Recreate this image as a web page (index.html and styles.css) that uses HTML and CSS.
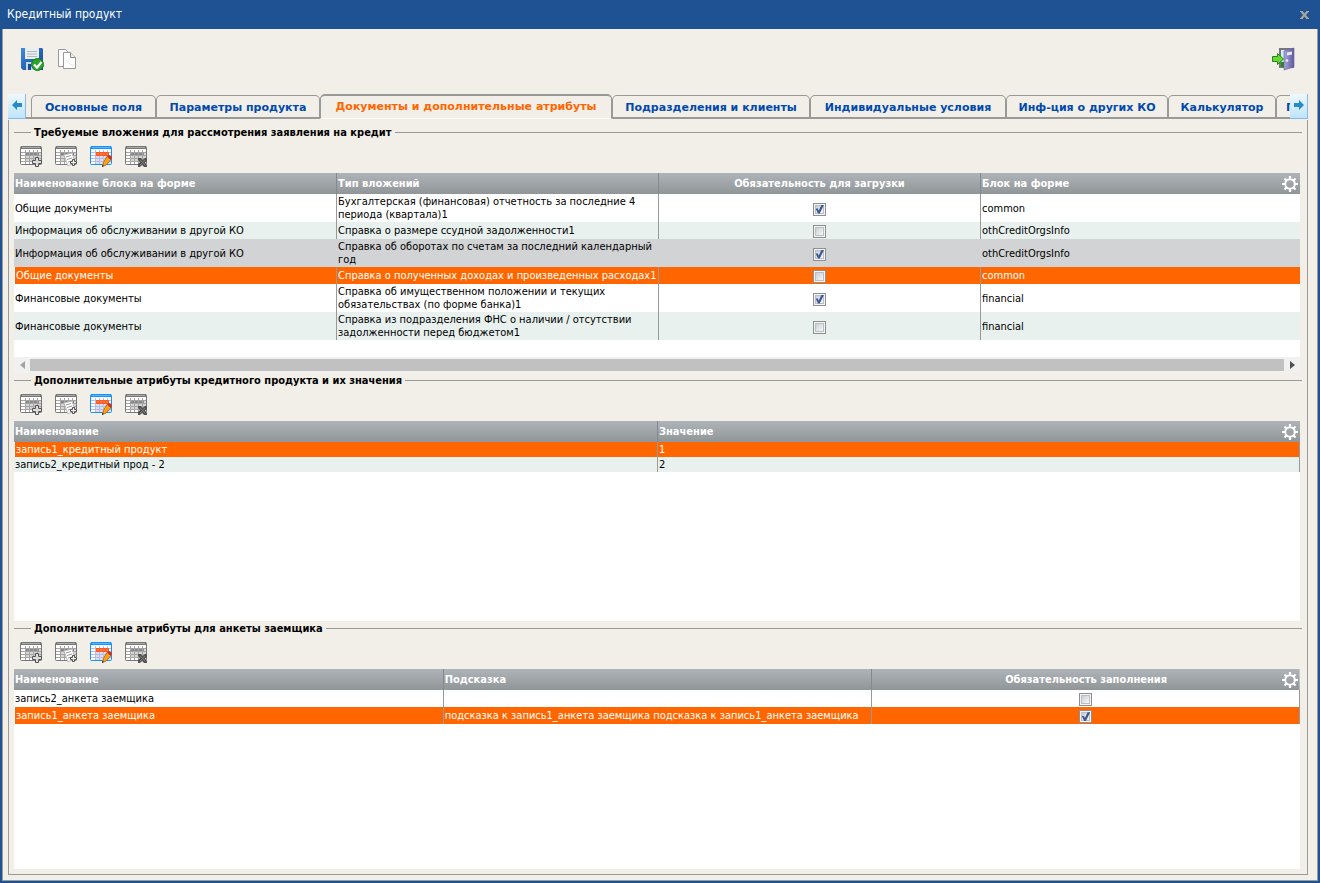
FILE: index.html
```html
<!DOCTYPE html>
<html lang="ru">
<head>
<meta charset="utf-8">
<title>Кредитный продукт</title>
<link rel="stylesheet" href="styles.css">
</head>
<body>
<svg class="sprite" aria-hidden="true">
  <defs>
    <linearGradient id="blue" x1="0" y1="0" x2="1" y2="1"><stop offset="0" stop-color="#3f8ce0"/><stop offset="1" stop-color="#0f4596"/></linearGradient>
    <linearGradient id="door" x1="0" y1="0" x2="1" y2="0"><stop offset="0" stop-color="#a9a6dc"/><stop offset="1" stop-color="#5f5a9e"/></linearGradient>
    <symbol id="grid" viewBox="0 0 22 22">
      <rect x=".5" y="1.5" width="21" height="18" rx="1" fill="#fff" stroke="#777"/>
      <path d="M1 1h20v3H1z" fill="#777"/><path d="M2 2h18v1H2z" fill="#aaa"/>
      <path d="M6 7h15v9H6z" fill="#d5d5d5"/><path d="M6 7h13v3H6z" fill="#8a8a8a"/>
      <path d="M1 7.500h20M1 10.500h20M1 13.500h20M1 16.500h20M5.500 5v14M9.500 5v14M13.500 5v14M17.500 5v14" fill="none" stroke="#a4a4a4"/>
    </symbol>
    <symbol id="add" viewBox="0 0 22 22">
      <use href="#grid"/>
      <path d="M15.500 12.500h3v3h3v3h-3v3h-3v-3h-3v-3h3z" fill="#ddd" stroke="#555"/>
    </symbol>
    <symbol id="copyrow" viewBox="0 0 22 22">
      <use href="#grid"/>
      <path d="M9 10l8-2 3 9-7 4z" fill="#fff" stroke="#bbb"/>
      <path d="M11 12l5-1.500M12 14.500l5-1.500M13 17l4-1" stroke="#999" fill="none"/>
      <path d="M17.500 14.500h2v2h2v2h-2v2h-2v-2h-2v-2h2z" fill="#eee" stroke="#555"/>
    </symbol>
    <symbol id="edit" viewBox="0 0 22 22">
      <rect x=".5" y="1.500" width="21" height="18" rx="1" fill="#fff" stroke="#1593f5"/>
      <path d="M1 1h20v3H1z" fill="#1593f5"/><path d="M2 2h18v1H2z" fill="#55b9ff"/>
      <path d="M6 10h15v9H6z" fill="#d9dcf4"/>
      <path d="M1 7.500h20M1 10.500h20M1 13.500h20M1 16.500h20M5.500 5v14M9.500 5v14M13.500 5v14M17.500 5v14" fill="none" stroke="#b9bddb"/>
      <path d="M6 7h13v4H6z" fill="#ff5a20"/><path d="M7 9h11" stroke="#ff9870" stroke-dasharray="2 1"/>
      <path d="M17 11.500l4 3-5 5.500-3.500 1.500 1-4z" fill="#ffa31a" stroke="#b9690b"/>
      <path d="M17 11l2-1 3 2-1 3z" fill="#d8281c"/><path d="M12 22v-2l2 1z" fill="#333"/>
    </symbol>
    <symbol id="del" viewBox="0 0 22 22">
      <use href="#grid"/>
      <path d="M13 13h3l1.500 2L20 13h2v3l-2 1.500 2 2.500v2h-3l-2-2-2 2h-2v-3l2-2-2-2z" fill="#555"/>
      <path d="M15 15l5 5M20 15l-5 5" stroke="#777" fill="none"/>
    </symbol>
    <symbol id="gear" viewBox="0 0 16 16">
      <circle cx="8" cy="8" r="4.800" fill="none" stroke="#fff" stroke-width="2"/>
      <path d="M8 0v3M8 13v3M0 8h3M13 8h3M2.500 2.500l2 2M11.500 11.500l2 2M13.500 2.500l-2 2M4.500 11.500l-2 2" stroke="#fff" stroke-width="2.200" fill="none"/>
    </symbol>
  </defs>
</svg>
<div class="window">
  <header class="titlebar">
    <h1 class="title">Кредитный продукт</h1>
    <button class="close" type="button" aria-label="Закрыть"><svg viewBox="0 0 9 8" width="9" height="8"><path d="M1 0l7 8M8 0L1 8" stroke="#a5a5a0" stroke-width="2.200"/><path d="M0 .5h3M6 .5h3M0 7.500h3M6 7.500h3" stroke="#a5a5a0"/></svg></button>
  </header>
  <main class="content">
    <div class="toolbar">
      <button class="icon-button" type="button" aria-label="Сохранить">
        <svg width="24" height="24" viewBox="0 0 24 24"><path d="M1 1h21l1 1v21H3l-2-2z" fill="url(#blue)"/><path d="M5 1h14v11H5z" fill="#e9eef2"/><path d="M7 4.500h10M7 7h10M7 9.500h10" stroke="#b6babd"/><path d="M6 15h12v8H6z" fill="#c8d7e8"/><path d="M8 17h3v6H8z" fill="#174f9e"/><circle cx="17.500" cy="17.500" r="6" fill="#27a52d" stroke="#147a1c"/><path d="M14 17.500l3 3 4.500-5.500" fill="none" stroke="#fff" stroke-width="2.200"/></svg>
      </button>
      <button class="icon-button" type="button" aria-label="Копировать">
        <svg width="24" height="24" viewBox="0 0 24 24"><path d="M3.500 2.500h7l3 3v14h-10z" fill="#fcfcfc" stroke="#999"/><path d="M8.500 5.500h7l5 5v11h-12z" fill="#fff" stroke="#999"/><path d="M15.500 5.500v5h5" fill="#eee" stroke="#888"/><path d="M11 13l5 5h3" fill="none" stroke="#e4e4e4"/></svg>
      </button>
      <button class="icon-button exit" type="button" aria-label="Выход">
        <svg width="24" height="24" viewBox="0 0 24 24"><path d="M8 1h15v20H8z" fill="#777480"/><path d="M10 3h7v16h-7z" fill="#cdeef6"/><path d="M10 15h5v5h-5z" fill="#268c1e"/><path d="M13 4l10-3v19l-10 3z" fill="url(#door)" stroke="#66619a" stroke-width=".6"/><path d="M16 5.500l5-1v3l-5 1z" fill="#e8e8fa"/><circle cx="16" cy="13.500" r="1.300" fill="#eee"/><path d="M1.500 9.500h5v-3l6 5.500-6 5.500v-3h-5z" fill="#6bd732" stroke="#278517"/></svg>
      </button>
    </div>
    <div class="tabstrip">
      <button class="scroll-tab" type="button" aria-label="Назад"><svg width="10" height="10" viewBox="0 0 10 10"><path d="M5 0v3h5v4H5v3L0 5z" fill="#238acb"/></svg></button>
      <div class="tabs" role="tablist">
        <button class="tab" role="tab" type="button">Основные поля</button>
        <button class="tab" role="tab" type="button">Параметры продукта</button>
        <button class="tab active" role="tab" type="button" aria-selected="true">Документы и дополнительные атрибуты</button>
        <button class="tab" role="tab" type="button">Подразделения и клиенты</button>
        <button class="tab" role="tab" type="button">Индивидуальные условия</button>
        <button class="tab" role="tab" type="button">Инф-ция о других КО</button>
        <button class="tab" role="tab" type="button">Калькулятор</button>
        <button class="tab" role="tab" type="button">П</button>
      </div>
      <button class="scroll-tab" type="button" aria-label="Вперёд"><svg width="10" height="10" viewBox="0 0 10 10"><path d="M5 0v3H0v4h5v3l5-5z" fill="#238acb"/></svg></button>
    </div>
    <div class="panel" role="tabpanel">
      <section class="group">
        <h2 class="legend">Требуемые вложения для рассмотрения заявления на кредит</h2>
        <div class="tools">
          <button class="tool" type="button" aria-label="Добавить"><svg><use href="#add"/></svg></button>
          <button class="tool" type="button" aria-label="Добавить копию"><svg><use href="#copyrow"/></svg></button>
          <button class="tool" type="button" aria-label="Изменить"><svg><use href="#edit"/></svg></button>
          <button class="tool" type="button" aria-label="Удалить"><svg><use href="#del"/></svg></button>
        </div>
        <div class="grid">
          <table class="table open">
            <thead><tr><th>Наименование блока на форме</th><th>Тип вложений</th><th class="center">Обязательность для загрузки</th><th>Блок на форме</th></tr></thead>
            <tbody>
              <tr><td>Общие документы</td><td>Бухгалтерская (финансовая) отчетность за последние 4 периода (квартала)1</td><td><input class="check" type="checkbox" aria-label="Обязательность" checked></td><td>common</td></tr>
              <tr><td>Информация об обслуживании в другой КО</td><td>Справка о размере ссудной задолженности1</td><td><input class="check" type="checkbox" aria-label="Обязательность"></td><td>othCreditOrgsInfo</td></tr>
              <tr class="hover"><td>Информация об обслуживании в другой КО</td><td>Справка об оборотах по счетам за последний календарный год</td><td><input class="check" type="checkbox" aria-label="Обязательность" checked></td><td>othCreditOrgsInfo</td></tr>
              <tr class="selected"><td>Общие документы</td><td>Справка о полученных доходах и произведенных расходах1</td><td><input class="check" type="checkbox" aria-label="Обязательность"></td><td>common</td></tr>
              <tr><td>Финансовые документы</td><td>Справка об имущественном положении и текущих обязательствах (по форме банка)1</td><td><input class="check" type="checkbox" aria-label="Обязательность" checked></td><td>financial</td></tr>
              <tr><td>Финансовые документы</td><td>Справка из подразделения ФНС о наличии / отсутствии задолженности перед бюджетом1</td><td><input class="check" type="checkbox" aria-label="Обязательность"></td><td>financial</td></tr>
            </tbody>
          </table>
          <button class="settings" type="button" aria-label="Настройки"><svg><use href="#gear"/></svg></button>
          <div class="scrollbar">
            <button class="scroll-arrow" type="button" aria-label="Влево"><svg width="5" height="8" viewBox="0 0 5 8"><path d="M5 0v8L0 4z" fill="#a3a3a3"/></svg></button>
            <div class="thumb"></div>
            <button class="scroll-arrow" type="button" aria-label="Вправо"><svg width="5" height="8" viewBox="0 0 5 8"><path d="M0 0v8l5-4z" fill="#505050"/></svg></button>
          </div>
        </div>
      </section>
      <section class="group">
        <h2 class="legend">Дополнительные атрибуты кредитного продукта и их значения</h2>
        <div class="tools">
          <button class="tool" type="button" aria-label="Добавить"><svg><use href="#add"/></svg></button>
          <button class="tool" type="button" aria-label="Добавить копию"><svg><use href="#copyrow"/></svg></button>
          <button class="tool" type="button" aria-label="Изменить"><svg><use href="#edit"/></svg></button>
          <button class="tool" type="button" aria-label="Удалить"><svg><use href="#del"/></svg></button>
        </div>
        <div class="grid">
          <table class="table">
            <thead><tr><th>Наименование</th><th>Значение</th></tr></thead>
            <tbody>
              <tr class="selected"><td>запись1_кредитный продукт</td><td>1</td></tr>
              <tr><td>запись2_кредитный прод - 2</td><td>2</td></tr>
            </tbody>
          </table>
          <button class="settings" type="button" aria-label="Настройки"><svg><use href="#gear"/></svg></button>
        </div>
      </section>
      <section class="group">
        <h2 class="legend">Дополнительные атрибуты для анкеты заемщика</h2>
        <div class="tools">
          <button class="tool" type="button" aria-label="Добавить"><svg><use href="#add"/></svg></button>
          <button class="tool" type="button" aria-label="Добавить копию"><svg><use href="#copyrow"/></svg></button>
          <button class="tool" type="button" aria-label="Изменить"><svg><use href="#edit"/></svg></button>
          <button class="tool" type="button" aria-label="Удалить"><svg><use href="#del"/></svg></button>
        </div>
        <div class="grid">
          <table class="table">
            <thead><tr><th>Наименование</th><th>Подсказка</th><th class="center">Обязательность заполнения</th></tr></thead>
            <tbody>
              <tr><td>запись2_анкета заемщика</td><td></td><td><input class="check" type="checkbox" aria-label="Обязательность заполнения"></td></tr>
              <tr class="selected"><td>запись1_анкета заемщика</td><td>подсказка к запись1_анкета заемщика подсказка к запись1_анкета заемщика</td><td><input class="check" type="checkbox" aria-label="Обязательность заполнения" checked></td></tr>
            </tbody>
          </table>
          <button class="settings" type="button" aria-label="Настройки"><svg><use href="#gear"/></svg></button>
        </div>
      </section>
    </div>
  </main>
</div>
</body>
</html>
```
FILE: styles.css
```css
* { box-sizing: border-box; }
body {
  margin: 0;
  font: 11px/13px "DejaVu Sans Condensed", "DejaVu Sans", sans-serif;
  color: #000;
}
button {
  padding: 0;
  border: 0;
  background: none;
  font: inherit;
  color: inherit;
}
svg { display: block; }
.sprite { position: absolute; width: 0; height: 0; }

.window {
  display: flex;
  flex-direction: column;
  min-height: 100vh;
  padding: 0 2px 2px;
  background: #1e5292;
}
.titlebar {
  display: flex;
  align-items: center;
  justify-content: space-between;
  height: 29px;
  padding: 0 9px 0 5px;
}
.title {
  margin: 0;
  font-size: 12px;
  font-weight: normal;
  color: #fff;
}
.content {
  flex: 1;
  display: flex;
  flex-direction: column;
  padding: 18px 9px 5px 5px;
  border: 1px solid #9b9b9b;
  border-top: 0;
  background: #f2efe8;
}
.toolbar {
  display: flex;
  gap: 11px;
  padding: 0 13px 23px 12px;
}
.exit { margin-left: auto; }

.tabstrip { display: flex; height: 25px; }
.scroll-tab {
  flex: none;
  display: flex;
  justify-content: center;
  align-items: flex-start;
  width: 18px;
  padding-top: 6px;
  border: solid #8ab8ea;
  border-width: 0 1px 1px 0;
  background: linear-gradient(#eef8fd, #bfe4fb);
}
.tabs {
  flex: 1;
  display: grid;
  grid-template-columns: 125px 164px 292px 198px 196px 162px 108px 1fr;
  align-items: end;
  min-width: 0;
  overflow: hidden;
  padding-left: 5px;
  background: linear-gradient(#999, #999) bottom / 100% 2px no-repeat;
}
.tab {
  height: 24px;
  padding: 1px 0 0;
  border: solid #999;
  border-width: 1px 1px 2px;
  border-radius: 5px 5px 0 0;
  background: #f2efe8;
  font-family: "DejaVu Sans", sans-serif;
  font-size: 11px;
  font-weight: bold;
  color: #0049ad;
  white-space: nowrap;
}
.tab:last-child {
  padding-left: 9px;
  border-right: 0;
  border-top-right-radius: 0;
  text-align: left;
}
.tab.active {
  height: 25px;
  border-top-width: 2px;
  border-bottom: 1px solid #fff;
  padding: 0 0 1px;
  color: #f60;
}

.panel {
  flex: 1;
  display: flex;
  flex-direction: column;
  margin-top: 1px;
  padding: 5px;
  border: 1px solid #999;
  border-top: 0;
}
.group { flex: 1 0 0; display: flex; flex-direction: column; min-height: 248px; }
.legend {
  display: flex;
  align-items: center;
  gap: 3px;
  height: 14px;
  margin: 0;
  font-size: 11px;
}
.legend::before { content: ""; width: 17px; height: 1px; background: #999; }
.legend::after { content: ""; flex: 1; height: 1px; background: #999; }
.tools { display: flex; gap: 13px; padding: 6px; }
.tool svg { width: 22px; height: 22px; }

.grid {
  position: relative;
  flex: 1;
  display: flex;
  flex-direction: column;
  margin-right: 2px;
  overflow: hidden;
  background: #fff;
}
.table {
  width: 100%;
  table-layout: fixed;
  border-spacing: 0;
}
.table.open { width: calc(100% + 2px); }
.table th {
  height: 21px;
  padding: 1px;
  text-align: left;
  color: #fff;
}
.table th + th { border-left: 1px solid #85898c; }
.table thead { background: linear-gradient(#afb4b9, #909598); }
.table .center { text-align: center; }
.table td { padding: 1px; }
.table td + td { border-left: 1px solid #999; }
.table td:last-child { border-right: 1px solid #999; }
.table tbody tr:nth-child(even) { background: #e8f1ee; }
.table tbody tr.hover { background: #d2d3d5; }
.table .hover td { border-color: transparent; }
.table tbody tr.selected { background: #f60; color: #fff; }
.selected td:first-child { border-left: 1px solid #fff; }
.settings { position: absolute; top: 3px; right: 2px; }
.settings svg { width: 16px; height: 16px; }

.check {
  appearance: none;
  display: block;
  width: 13px;
  height: 13px;
  margin: 2px auto 0;
  border: 1px solid #8e8f8f;
  background: linear-gradient(135deg, #cbcfd5, #f6f6f6) center / 7px 7px no-repeat, linear-gradient(#f4f4f4, #f4f4f4);
  box-shadow: inset 0 0 0 1px #f4f4f4, inset 0 0 0 2px #b9bdc4;
}
.check:checked::before {
  content: "";
  display: block;
  width: 9px;
  height: 9px;
  margin: 1px;
  background: #3d5695;
  clip-path: polygon(8% 48%, 28% 42%, 42% 66%, 72% 4%, 100% 4%, 52% 100%, 34% 100%);
}

.scrollbar {
  display: flex;
  align-items: center;
  height: 16px;
  margin-top: auto;
  background: #f1f1f1;
}
.scroll-arrow { display: flex; justify-content: center; width: 16px; }
.thumb { flex: 1; height: 12px; background: #c1c1c1; }
```
